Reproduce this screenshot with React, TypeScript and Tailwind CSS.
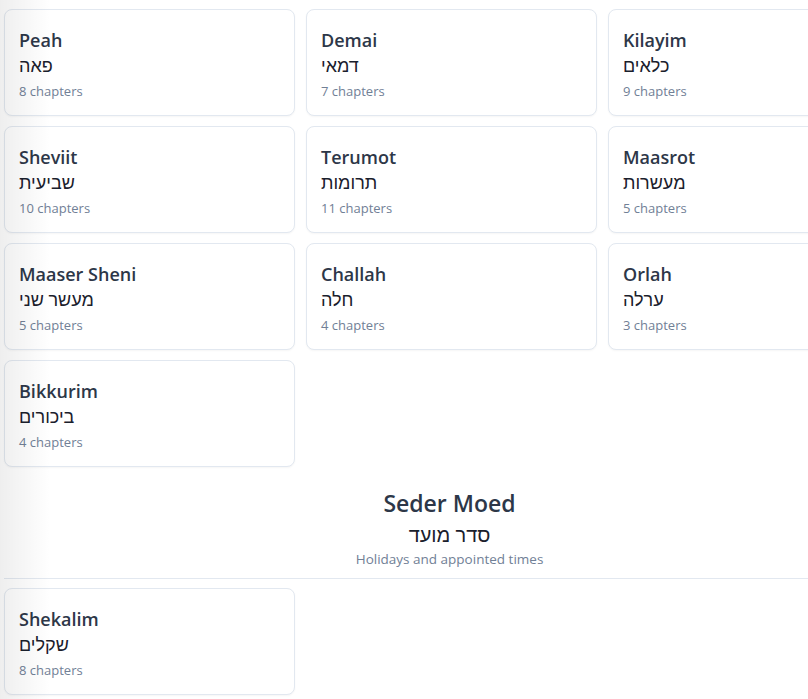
const zeraim = [
  { name: "Peah", he: "פאה", ch: 8 },
  { name: "Demai", he: "דמאי", ch: 7 },
  { name: "Kilayim", he: "כלאים", ch: 9 },
  { name: "Sheviit", he: "שביעית", ch: 10 },
  { name: "Terumot", he: "תרומות", ch: 11 },
  { name: "Maasrot", he: "מעשרות", ch: 5 },
  { name: "Maaser Sheni", he: "מעשר שני", ch: 5 },
  { name: "Challah", he: "חלה", ch: 4 },
  { name: "Orlah", he: "ערלה", ch: 3 },
  { name: "Bikkurim", he: "ביכורים", ch: 4 },
];

const moed = [{ name: "Shekalim", he: "שקלים", ch: 8 }];

function TractateCard({ name, he, ch }: { name: string; he: string; ch: number }) {
  return (
    <div className="h-[107px] rounded-lg border border-[#e2e8f0] bg-white px-[14px] pt-[18px] shadow-[0_1px_2px_rgba(0,0,0,0.04)]">
      <div className="text-[18px] font-semibold leading-[24px] text-[#2d3748]">{name}</div>
      <div className="flex">
        <span dir="rtl" className="font-['Noto_Sans',sans-serif] text-[18px] leading-[27px] text-[#1a202c]">
          {he}
        </span>
      </div>
      <div className="mt-[3px] text-[13px] leading-[18px] text-[#718096]">{ch} chapters</div>
    </div>
  );
}

export default function App() {
  return (
    <div className="relative h-[699px] w-[808px] overflow-hidden bg-white font-['Open_Sans','Noto_Sans',sans-serif]">
      <div className="w-[895px] pl-[4px] pt-[9px]">
        <div className="grid grid-cols-[291px_291px_291px] gap-x-[11px] gap-y-[10px]">
          {zeraim.map((t) => (
            <TractateCard key={t.name} {...t} />
          ))}
        </div>

        <div className="mt-[20px] flex flex-col items-center">
          <h2 className="text-[23px] font-semibold leading-[32px] text-[#2d3748]">Seder Moed</h2>
          <div dir="rtl" className="mt-[2px] font-['Noto_Sans',sans-serif] text-[20px] leading-[28px] text-[#1a202c]">
            סדר מועד
          </div>
          <div className="mt-[0px] text-[13.5px] leading-[20px] text-[#718096]">Holidays and appointed times</div>
        </div>
        <div className="mt-[9px] border-t border-[#e2e8f0]" />

        <div className="mt-[9px] grid grid-cols-[291px_291px_291px] gap-x-[11px]">
          {moed.map((t) => (
            <TractateCard key={t.name} {...t} />
          ))}
        </div>
      </div>
      <div className="pointer-events-none absolute inset-y-0 left-0 w-[50px] bg-[linear-gradient(to_right,rgba(0,0,0,0.065),rgba(0,0,0,0))]" />
    </div>
  );
}
